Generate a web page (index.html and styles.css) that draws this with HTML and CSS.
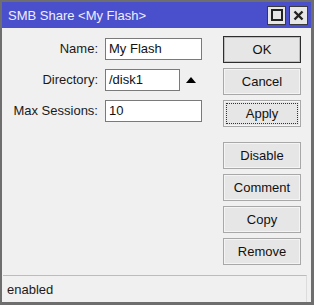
FILE: index.html
```html
<!DOCTYPE html>
<html>
<head>
<meta charset="utf-8">
<link rel="stylesheet" href="styles.css">
</head>
<body>
<div class="window">
  <div class="titlebar">
    <span class="title">SMB Share &lt;My Flash&gt;</span>
    <div class="tbtns">
      <div class="tbtn"><svg width="12" height="12" viewBox="0 0 12 12"><rect x="1" y="1" width="10" height="10" fill="none" stroke="#222" stroke-width="2"/></svg></div>
      <div class="tbtn"><svg width="11" height="11" viewBox="0 0 11 11"><path d="M1.5 1.5L9.5 9.5M9.5 1.5L1.5 9.5" stroke="#222" stroke-width="2.4"/></svg></div>
    </div>
  </div>
  <div class="content">
    <div class="form">
      <label class="lbl">Name:</label>
      <div class="field"><div class="input wide">My Flash</div></div>
      <label class="lbl">Directory:</label>
      <div class="field"><div class="input narrow">/disk1</div><svg class="arrow" width="10" height="7" viewBox="0 0 10 7"><path d="M0 7L5 1L10 7Z" fill="#000"/></svg></div>
      <label class="lbl">Max Sessions:</label>
      <div class="field"><div class="input wide">10</div></div>
    </div>
    <div class="buttons">
      <div class="btn default">OK</div>
      <div class="btn">Cancel</div>
      <div class="btn focus"><span>Apply</span></div>
      <div class="btn sep">Disable</div>
      <div class="btn">Comment</div>
      <div class="btn">Copy</div>
      <div class="btn">Remove</div>
    </div>
  </div>
  <div class="status"><span>enabled</span></div>
</div>
</body>
</html>
```

FILE: styles.css
```css
html, body {
  margin: 0;
  padding: 0;
  background: #f0f0f0;
}
.window {
  width: 314px;
  height: 305px;
  box-sizing: border-box;
  border-style: solid;
  border-color: #6e6e6e;
  border-width: 2px 3px 3px 2px;
  background: #f0f0f0;
  display: flex;
  flex-direction: column;
  font-family: "Liberation Sans", Arial, sans-serif;
  font-size: 13px;
  color: #000;
}
.titlebar {
  height: 26px;
  background: #4a4fcb;
  display: flex;
  align-items: center;
  padding-left: 6px;
  padding-right: 3px;
  flex-shrink: 0;
}
.title {
  color: #eeeeff;
  font-size: 13px;
}
.tbtns {
  margin-left: auto;
  display: flex;
  gap: 3px;
}
.tbtn {
  width: 17px;
  height: 17px;
  background: #e6e6e6;
  border: 1px solid #3a3a3a;
  display: flex;
  align-items: center;
  justify-content: center;
}
.content {
  flex: 1;
  display: flex;
  padding: 8px 10px 0 6px;
}
.form {
  display: grid;
  grid-template-columns: 90px auto;
  column-gap: 7px;
  row-gap: 9px;
  margin-top: 2px;
  align-content: start;
  width: 194px;
}
.lbl {
  text-align: right;
  height: 22px;
  line-height: 22px;
  color: #1a1a1a;
}
.field {
  display: flex;
  align-items: center;
  height: 22px;
}
.input {
  height: 22px;
  box-sizing: border-box;
  border: 1px solid #7a7a7a;
  background: #fff;
  line-height: 20px;
  padding-left: 3px;
  color: #111;
}
.wide { width: 97px; }
.narrow { width: 75px; }
.arrow {
  margin-left: 6px;
  margin-top: -2px;
}
.buttons {
  margin-left: auto;
  display: flex;
  flex-direction: column;
  gap: 5px;
}
.btn {
  width: 78px;
  height: 27px;
  box-sizing: border-box;
  border: 1px solid #a8a8a8;
  background: #e6e6e6;
  box-shadow: inset 0 0 0 1px #f4f4f4;
  display: flex;
  align-items: center;
  justify-content: center;
  color: #111;
}
.btn.default {
  border-color: #2e2e2e;
  box-shadow: inset 0 0 0 1px #bdbdbd;
}
.btn.focus {
  position: relative;
}
.btn.focus::after {
  content: "";
  position: absolute;
  left: 2px;
  top: 2px;
  right: 2px;
  bottom: 2px;
  border: 1px dotted #333;
}
.btn.sep {
  margin-top: 10px;
}
.status {
  height: 27px;
  margin: 0 4px 0 1px;
  box-sizing: border-box;
  border-top: 1px solid #bcbcbc;
  border-right: 1px solid #dcdcdc;
  display: flex;
  align-items: center;
  padding-left: 4px;
  color: #1a1a1a;
  flex-shrink: 0;
}
```
